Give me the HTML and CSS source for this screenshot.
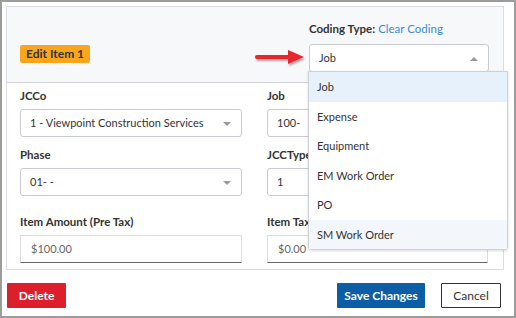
FILE: index.html
```html
<!DOCTYPE html>
<html>
<head>
	<meta charset="utf-8" />
	<title>Edit Item</title>
	<link rel="stylesheet" href="styles.css">
</head>
<body>
<div class="frame">
	<div class="card">
		<div class="card-head">
			<span class="badge">Edit Item 1</span>
			<div class="coding">
				<div class="coding-title"><b>Coding Type:</b> <a href="#">Clear Coding</a></div>
				<div class="select select-open">Job<span class="caret up"></span></div>
			</div>
		</div>
		<div class="card-body">
			<div class="field">
				<label>JCCo</label>
				<div class="select">1 - Viewpoint Construction Services<span class="caret"></span></div>
			</div>
			<div class="field">
				<label>Job</label>
				<div class="select">100-<span class="caret"></span></div>
			</div>
			<div class="field">
				<label>Phase</label>
				<div class="select">01- -<span class="caret"></span></div>
			</div>
			<div class="field">
				<label>JCCType</label>
				<div class="select">1<span class="caret"></span></div>
			</div>
			<div class="field field-money">
				<label>Item Amount (Pre Tax)</label>
				<div class="input">$100.00</div>
			</div>
			<div class="field field-money">
				<label>Item Tax</label>
				<div class="input">$0.00</div>
			</div>
		</div>
	</div>
	<div class="actions">
		<button class="btn btn-delete">Delete</button>
		<div class="actions-right">
			<button class="btn btn-save">Save Changes</button>
			<button class="btn btn-cancel">Cancel</button>
		</div>
	</div>

	<!-- open coding type list -->
	<ul class="menu">
		<li class="active">Job</li>
		<li>Expense</li>
		<li>Equipment</li>
		<li>EM Work Order</li>
		<li>PO</li>
		<li class="hover">SM Work Order</li>
	</ul>
	<!-- annotation arrow -->
	<svg class="arrow" width="60" height="20" viewBox="0 0 60 20">
		<defs>
			<filter id="sh" x="-20%" y="-50%" width="140%" height="200%">
				<feDropShadow dx="1" dy="2" stdDeviation="1.2" flood-color="#000" flood-opacity="0.35"/>
			</filter>
		</defs>
		<g filter="url(#sh)" fill="#e8262d">
			<rect x="3" y="7" width="36" height="4" rx="2"/>
			<polygon points="36,2 52,9 36,16"/>
		</g>
	</svg>
</div>
</body>
</html>
```

FILE: styles.css
```css
*{
	box-sizing: border-box;
}
body{
	margin: 0;
	padding: 0;
	font-family: Lato, "Open Sans", Arial, sans-serif;
	font-size: 11px;
	color: #333;
}
.frame{
	position: relative;
	width: 516px;
	height: 318px;
	border: 2px solid #9c9c9c;
	padding: 4px 12px 0 4px;
	background: #fff;
}
/* carte */
.card{
	border: 1px solid #dcdde2;
	width: 498px;
}
.card-head{
	display: flex;
	justify-content: space-between;
	align-items: flex-end;
	height: 76px;
	padding: 0 14px 10px 13px;
	background-color: #f7f8fa;
	border-bottom: 1px solid #d0d2d8;
}
.badge{
	margin-bottom: 9px;
	padding: 1px 6px;
	background-color: #f9a61e;
	border-radius: 2px;
	font-weight: bold;
	font-size: 12px;
	line-height: 16px;
}
.coding{
	width: 180px;
}
.coding-title{
	margin-bottom: 7px;
	font-size: 11.5px;
	line-height: 16px;
}
.coding-title a{
	color: #3d8bd0;
	text-decoration: none;
}
.select{
	position: relative;
	height: 28px;
	padding: 0 9px;
	line-height: 26px;
	background: #fff;
	border: 1px solid #c9cbd0;
	border-radius: 3px;
	white-space: nowrap;
}
.caret{
	position: absolute;
	right: 10px;
	top: 12px;
	border-left: 4px solid transparent;
	border-right: 4px solid transparent;
	border-top: 4px solid #999;
}
.caret.up{
	border-top: none;
	border-bottom: 4px solid #999;
}
.card-body{
	display: grid;
	grid-template-columns: 222px 221px;
	column-gap: 25px;
	padding: 6px 14px 6px 13px;
}
.field label{
	display: block;
	font-weight: bold;
	font-size: 11.5px;
	line-height: 14px;
	margin-bottom: 6px;
}
.field{
	margin-bottom: 11px;
}
.field-money{
	margin-top: 8px;
	margin-bottom: 0;
}
.input{
	height: 28px;
	padding: 0 10px;
	line-height: 26px;
	color: #666;
	border: 1px solid #dcdde2;
	border-bottom: 1px solid #666;
}
/* boutons */
.actions{
	display: flex;
	justify-content: space-between;
	margin-top: 13px;
	padding-left: 1px;
	width: 495px;
}
.actions-right{
	display: flex;
	gap: 16px;
}
.btn{
	height: 25px;
	padding: 0;
	border: none;
	border-radius: 1px;
	font-family: inherit;
	font-size: 12px;
	font-weight: bold;
	color: #fff;
	white-space: nowrap;
}
.btn-delete{
	width: 59px;
	background-color: #dc1e2d;
}
.btn-save{
	width: 88px;
	background-color: #0b5ea5;
}
.btn-cancel{
	width: 60px;
	background-color: #fff;
	color: #333;
	font-weight: normal;
	border: 1px solid #333;
}
/* liste ouverte */
.menu{
	position: absolute;
	left: 306px;
	top: 69px;
	width: 200px;
	margin: 0;
	padding: 0;
	list-style: none;
	background: #fff;
	border: 1px solid #cfd1d6;
	border-radius: 0 0 3px 3px;
	box-shadow: 0 1px 3px rgba(0,0,0,0.15);
}
.menu li{
	height: 29.5px;
	padding-left: 8px;
	line-height: 29.5px;
}
.menu li.active{
	background-color: #e7f1fc;
}
.menu li.hover{
	background-color: #f3f7fc;
}
.arrow{
	position: absolute;
	left: 250px;
	top: 46px;
}
```
